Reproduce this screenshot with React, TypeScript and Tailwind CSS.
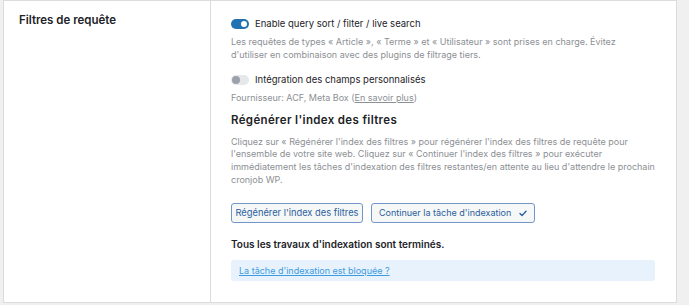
import React from "react";

function Toggle({ on }: { on: boolean }) {
  return on ? (
    <span className="relative inline-block w-[18px] h-[10px] rounded-full bg-[#2271b1] shrink-0">
      <span className="absolute right-[2px] top-[2px] w-[6px] h-[6px] rounded-full bg-white" />
    </span>
  ) : (
    <span className="relative inline-block w-[18px] h-[10px] rounded-full bg-[#e6e7e8] shrink-0">
      <span className="absolute left-[1px] top-[1px] w-[8px] h-[8px] rounded-full bg-[#9ca2ab]" />
    </span>
  );
}

export default function App() {
  return (
    <div
      className="w-[689px] h-[305px] bg-[#f0f0f1] pl-[3px] overflow-hidden"
      style={{ fontFamily: "Inter, 'Noto Sans', sans-serif" }}
    >
      <div className="w-[674px] h-[303px] bg-white border border-[#dcdcde] flex">
        <div className="w-[207px] border-r border-[#dcdcde] pl-[15px] pt-[12px]">
          <div className="text-[11.5px] leading-[14px] font-semibold text-[#1d2327]">
            Filtres de requête
          </div>
        </div>
        <div className="flex-1 pl-[20px] pr-[10px] pt-[16px] text-[#1d2327] whitespace-nowrap">
          <div className="flex items-center gap-[6px] h-[14px] text-[9.5px] leading-[14px]">
            <Toggle on={true} />
            <span>Enable query sort / filter / live search</span>
          </div>
          <p className="mt-[5px] text-[9px] leading-[12.6px] text-[#8c8f94]">
            Les requêtes de types « Article », « Terme » et « Utilisateur » sont prises en charge. Évitez
            <br />
            d'utiliser en combinaison avec des plugins de filtrage tiers.
          </p>
          <div className="mt-[12px] flex items-center gap-[6px] h-[14px] text-[9.5px] leading-[14px]">
            <Toggle on={false} />
            <span>Intégration des champs personnalisés</span>
          </div>
          <p className="mt-[5px] text-[9px] leading-[12.6px] text-[#8c8f94]">
            Fournisseur: ACF, Meta Box (<span className="underline">En savoir plus</span>)
          </p>
          <div className="mt-[8px] text-[11.5px] leading-[14px] font-semibold tracking-[0.35px]">
            Régénérer l'index des filtres
          </div>
          <p className="mt-[9px] text-[9px] leading-[12.6px] text-[#8c8f94]">
            Cliquez sur « Régénérer l'index des filtres » pour régénérer l'index des filtres de requête pour
            <br />
            l'ensemble de votre site web. Cliquez sur « Continuer l'index des filtres » pour exécuter
            <br />
            immédiatement les tâches d'indexation des filtres restantes/en attente au lieu d'attendre le prochain
            <br />
            cronjob WP.
          </p>
          <div className="mt-[17px] flex gap-[8px]">
            <button className="h-[20px] w-[132px] border border-[#7396c8] rounded-[3px] bg-[#f6f7f7] text-[#2a5f9e] text-[9.3px] leading-[18px] flex items-center justify-center">
              Régénérer l'index des filtres
            </button>
            <button className="h-[20px] w-[164px] border border-[#7396c8] rounded-[3px] bg-[#f6f7f7] text-[#2a5f9e] text-[9px] leading-[18px] flex items-center pl-[7px] gap-[8px]">
              <span>Continuer la tâche d'indexation</span>
              <svg width="8" height="7" viewBox="0 0 8 7" fill="none">
                <path d="M1 3.6 L3 5.6 L7 1.2" stroke="#2a5f9e" strokeWidth="1.4" strokeLinecap="round" strokeLinejoin="round" />
              </svg>
            </button>
          </div>
          <div className="mt-[14px] text-[10px] leading-[14px] font-semibold">
            Tous les travaux d'indexation sont terminés.
          </div>
          <div className="mt-[9px] w-[424px] h-[21px] rounded-[3px] bg-[#e7f2fd] pl-[8px] flex items-center">
            <span className="text-[9px] text-[#3d9be0] underline">La tâche d'indexation est bloquée ?</span>
          </div>
        </div>
      </div>
    </div>
  );
}
